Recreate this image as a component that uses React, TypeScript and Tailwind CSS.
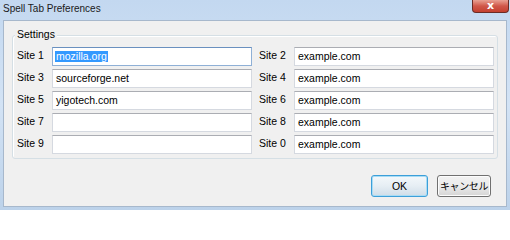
import React from "react";

const FONT = { fontFamily: '"Liberation Sans", "Noto Sans CJK JP", sans-serif' };

const sites: [string, string][] = [
  ["Site 1", "mozilla.org"],
  ["Site 2", "example.com"],
  ["Site 3", "sourceforge.net"],
  ["Site 4", "example.com"],
  ["Site 5", "yigotech.com"],
  ["Site 6", "example.com"],
  ["Site 7", ""],
  ["Site 8", "example.com"],
  ["Site 9", ""],
  ["Site 0", "example.com"],
];

const Field = ({ value, focused }: { value: string; focused?: boolean }) => (
  <div
    className={
      "h-[19px] bg-white border flex items-center pl-[2px] text-[10.5px] leading-none text-black " +
      (focused
        ? "border-[#8fb0d6] border-t-[#6a90bf]"
        : "border-[#d5d9e0] border-t-[#abadb3]")
    }
  >
    {focused ? (
      <span className="bg-[#3399ff] text-white px-[1px] h-[11px] flex items-center">{value}</span>
    ) : (
      <span className="px-[1px]">{value}</span>
    )}
  </div>
);

export default function App() {
  return (
    <div
      className="w-[510px] h-[210px] bg-gradient-to-b from-[#c3d8f0] via-[#d3e3f5] to-[#bcd2ea] flex flex-col"
      style={FONT}
    >
      {/* Title bar */}
      <div className="h-[20px] flex items-start justify-between pl-[3px] pr-[1px]">
        <span className="text-[10px] leading-none pt-[4px] text-[#1a1a1a]">Spell Tab Preferences</span>
        <div className="w-[37px] h-[13px] rounded-b-[4px] border border-t-0 border-[#6b2b25] bg-gradient-to-b from-[#e8a093] via-[#d0574a] to-[#c4402f] flex items-center justify-center">
          <span className="text-white text-[11px] font-bold leading-none -mt-[2px]" style={{ fontFamily: '"DejaVu Sans", sans-serif' }}>
            x
          </span>
        </div>
      </div>

      {/* Client area */}
      <div className="flex-1 mx-[3px] mb-[3px] bg-[#f0f0f0] border border-[#a7b8cc] flex flex-col px-[8px]">
        {/* Group box */}
        <div className="relative mt-[14px] border border-[#d5dfe5] rounded-[3px] shadow-[inset_1px_1px_0_#ffffff] pt-[11px] pb-[4px] pl-[4px] pr-[5px]">
          <span className="absolute -top-[7px] left-[2px] bg-[#f0f0f0] px-[2px] text-[10.5px] leading-none text-black">
            Settings
          </span>
          <div className="grid grid-cols-[35px_200px_42px_200px] gap-y-[3px] text-[10.5px] text-black">
            {sites.map(([label, value], i) => (
              <React.Fragment key={label}>
                <span className={"leading-none pt-[3px] " + (i % 2 === 1 ? "pl-[7px]" : "")}>{label}</span>
                <Field value={value} focused={i === 0} />
              </React.Fragment>
            ))}
          </div>
        </div>

        {/* Buttons */}
        <div className="mt-auto mb-[9px] flex justify-end gap-[9px] pr-[7px]">
          <button className="w-[57px] h-[22px] rounded-[3px] border border-[#3c9fd9] shadow-[inset_0_0_0_1px_#a8dcf5] bg-gradient-to-b from-[#f4f8fb] via-[#e6eef4] to-[#cfdde8] text-[10.5px] leading-none text-black">
            OK
          </button>
          <button
            className="w-[54px] h-[22px] rounded-[3px] border border-[#707070] shadow-[inset_0_0_0_1px_#fcfcfc] bg-gradient-to-b from-[#f2f2f2] via-[#ebebeb] to-[#d5d5d5] text-[10px] leading-none text-black whitespace-nowrap tracking-[-0.4px]"
            style={{ fontFamily: '"Noto Sans CJK JP", sans-serif' }}
          >
            キャンセル
          </button>
        </div>
      </div>
    </div>
  );
}
